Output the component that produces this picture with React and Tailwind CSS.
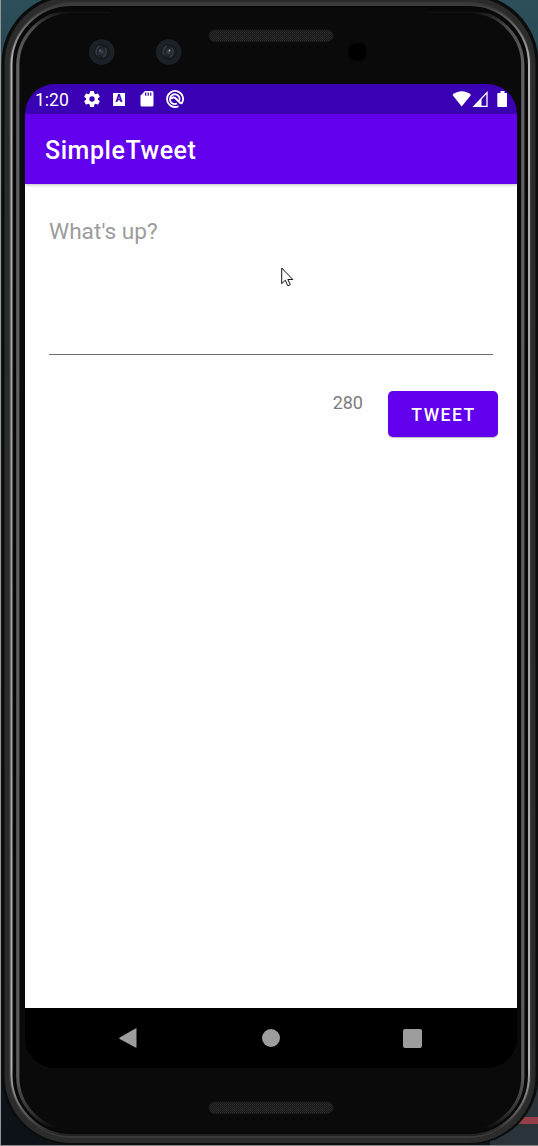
import React from "react";

function PhoneShell() {
  return (
    <svg className="absolute inset-0 h-[1146px] w-[538px]" viewBox="0 0 538 1146" aria-hidden="true">
      <defs>
        <linearGradient id="wall" x1="0" y1="0" x2="0" y2="1">
          <stop offset="0" stopColor="#2c4f59" />
          <stop offset="0.15" stopColor="#203c47" />
          <stop offset="0.8" stopColor="#10161c" />
          <stop offset="1" stopColor="#0c1218" />
        </linearGradient>
        <linearGradient id="shine" x1="0" y1="0" x2="0" y2="1">
          <stop offset="0" stopColor="#3c3c3c" />
          <stop offset="0.015" stopColor="#606060" />
          <stop offset="0.05" stopColor="#b4b4b4" />
          <stop offset="0.5" stopColor="#a0a0a0" />
          <stop offset="0.94" stopColor="#b4b4b4" />
          <stop offset="0.985" stopColor="#505050" />
          <stop offset="1" stopColor="#202020" />
        </linearGradient>
        <linearGradient id="inner" x1="0" y1="0" x2="0" y2="1">
          <stop offset="0" stopColor="#0a0a0a" />
          <stop offset="0.003" stopColor="#242426" />
          <stop offset="0.015" stopColor="#4c4c50" />
          <stop offset="0.05" stopColor="#626266" />
          <stop offset="0.95" stopColor="#5c5c60" />
          <stop offset="0.985" stopColor="#303032" />
          <stop offset="0.998" stopColor="#0a0a0a" />
        </linearGradient>
        <pattern id="mesh" width="2" height="2" patternUnits="userSpaceOnUse">
          <rect width="2" height="2" fill="#161616" />
          <rect width="1" height="1" fill="#303030" />
          <rect x="1" y="1" width="1" height="1" fill="#292929" />
        </pattern>
        <radialGradient id="lens">
          <stop offset="0" stopColor="#3d454e" />
          <stop offset="0.25" stopColor="#22272d" />
          <stop offset="0.6" stopColor="#14181b" />
          <stop offset="0.65" stopColor="#1b2126" />
          <stop offset="1" stopColor="#1b2126" />
        </radialGradient>
      </defs>
      <rect width="538" height="1146" fill="url(#wall)" />
      <rect x="490" y="1080" width="48" height="66" fill="#2b333a" />
      <path d="M490 1117h48v7h-48z" fill="#963f49" />
      <rect x="1.5" y="-6" width="537" height="1150.500" rx="69" fill="#0b0d0d" />
      <rect x="4.500" y="-3" width="531" height="1146" rx="67" fill="#2b2b2b" />
      <rect x="9" y="2" width="522.500" height="1136" rx="64" fill="#393939" />
      <rect x="11.500" y="5" width="517.500" height="1130" rx="60" fill="#080808" stroke="url(#shine)" strokeWidth="2" />
      <rect x="17.800" y="11.500" width="505" height="1119" rx="54" fill="#0a0a0a" stroke="url(#inner)" strokeWidth="3.200" />
      <rect x="110" y="8" width="318" height="8" fill="#0a0a0a" />
      <rect x="0" y="0" width="1" height="1146" fill="#969696" />
      <rect x="0" y="1145" width="538" height="1" fill="#858585" />
      <rect x="209" y="30" width="124" height="11.500" rx="5.700" fill="url(#mesh)" stroke="#1b1b1b" />
      <rect x="209" y="1102" width="124" height="11.500" rx="5.700" fill="url(#mesh)" stroke="#1b1b1b" />
      <circle cx="101.700" cy="52" r="12.800" fill="url(#lens)" />
      <circle cx="168.700" cy="52" r="12.800" fill="url(#lens)" />
      <path d="M97 55a6 6 0 0 1 3-9M105 48a6 6 0 0 1-2 9M164 55a6 6 0 0 1 3-9M172 48a6 6 0 0 1-2 9" fill="none" stroke="#343b44" strokeWidth="1.500" />
      <circle cx="100" cy="50.500" r="1" fill="#646b74" />
      <circle cx="169.500" cy="50.500" r="1" fill="#9ba1a8" />
      <circle cx="357.500" cy="52" r="9.500" fill="#000" />
    </svg>
  );
}

function StatusBar() {
  return (
    <div className="flex h-[30px] shrink-0 items-center bg-[#3a00b3] pl-[10px] pr-[9px] text-white">
      <span className="w-[47px] pt-[2px] text-[17.500px] leading-[30px]">1:20</span>
      <svg className="h-5 w-5" viewBox="0 0 24 24" fill="currentColor">
        <path d="M19.140 12.940c.04-.3.060-.61.060-.94s-.02-.64-.07-.94l2.030-1.580a.49.490 0 0 0 .12-.61l-1.920-3.320a.49.490 0 0 0-.59-.22l-2.390.96a7 7 0 0 0-1.620-.94l-.36-2.540a.48.480 0 0 0-.48-.41h-3.840a.48.480 0 0 0-.47.41l-.36 2.540c-.59.240-1.130.57-1.620.94l-2.390-.96a.48.480 0 0 0-.59.220L2.740 8.870a.48.480 0 0 0 .12.610l2.030 1.580c-.05.3-.09.63-.09.940s.02.640.07.940l-2.030 1.580a.49.490 0 0 0-.12.610l1.920 3.320c.12.220.37.290.59.220l2.390-.96c.5.380 1.030.7 1.620.940l.36 2.540c.05.240.24.410.48.410h3.840c.24 0 .44-.17.470-.41l.36-2.540c.59-.24 1.130-.56 1.620-.94l2.390.96c.22.080.47 0 .59-.22l1.920-3.320a.48.480 0 0 0-.12-.61zM12 15.200A3.200 3.200 0 1 1 12 8.800a3.200 3.200 0 0 1 0 6.400z" />
      </svg>
      <span className="ml-[11px] flex h-[13px] w-3 items-center justify-center bg-white text-[10px] font-black leading-none text-[#3a00b3]">A</span>
      <svg className="ml-[15px] h-4 w-[14px]" viewBox="0 0 14 16">
        <path d="M5 0h7a1.500 1.500 0 0 1 1.500 1.500v12.500A1.500 1.500 0 0 1 12 15.500H2A1.500 1.500 0 0 1 .5 14V4.500z" fill="#fff" />
        <path d="M5.700 1.500v3.300M8.200 1.500v3.300M10.700 1.500v3.300" stroke="#3a00b3" strokeWidth="1.200" />
      </svg>
      <svg className="ml-[12px] h-[18px] w-[18px]" viewBox="0 0 18 18" fill="none" stroke="#fff">
        <path d="M15.300 14A8 8 0 1 0 12.500 16.200" strokeWidth="1.800" />
        <path d="M13 11.600A4.900 4.900 0 1 0 11 13.500" strokeWidth="1.800" />
        <path d="M5 8.800c2-1.800 4-1.500 5 0l4.800 4.700" strokeWidth="2" />
      </svg>
      <svg className="ml-auto h-4 w-[56px]" viewBox="0 0 56 16">
        <path d="M0.500 4C5.500-1 14-1 19 4L9.700 15.500z" fill="#fff" />
        <path d="M35 1.600v13.700H22z" fill="none" stroke="#fff" strokeWidth="1.300" />
        <path d="M29.500 7.500v7.800H22z" fill="#fff" />
        <path d="M46 2h2.500V0h4v2h1.800q.7 0 .7.700v12.600q0 .7-.7.700H46q-.7 0-.7-.7V2.700q0-.7.7-.7z" fill="#fff" />
      </svg>
    </div>
  );
}

function NavigationBar() {
  return (
    <nav className="flex h-[60px] shrink-0 items-center justify-between bg-black pl-[93px] pr-[95px] text-[#9d9d9d]">
      <svg className="h-[22px] w-[19px]" viewBox="0 0 20 22" fill="currentColor">
        <path d="M18.400 1Q19.500.4 19.500 1.500V20.500q0 1-1.100.5L1.800 12q-1.200-.8 0-1.600z" />
      </svg>
      <span className="ml-px h-[18px] w-[18px] rounded-full bg-[#9d9d9d]" />
      <span className="h-[19px] w-[19px] rounded-[2px] bg-[#9d9d9d]" />
    </nav>
  );
}

export default function App() {
  return (
    <div className="relative h-[1146px] w-[538px] overflow-hidden bg-[#0a0a0a] pl-[25px] pt-[84px] font-[Roboto,sans-serif]">
      <PhoneShell />
      <div className="relative flex h-[984px] w-[492px] flex-col overflow-hidden rounded-[30px]">
        <StatusBar />
        <header className="z-10 flex h-[70px] shrink-0 items-center bg-[#6200ee] px-5 pt-[3px] text-[25px] font-medium tracking-[0.550px] text-white shadow-[0_1px_3px_rgba(0,0,0,0.25)]">
          SimpleTweet
        </header>
        <main className="flex-1 bg-[#fefefe] pl-6 pr-[19px] pt-[25px]">
          <div className="mr-[5px] h-[146px] border-b border-[#6c6c6c] pt-[6px] text-[22.700px] leading-[34px] text-[#9c9c9c]">
            What&apos;s up?
          </div>
          <div className="mt-9 flex items-start justify-end">
            <span className="mr-[25px] text-[18px] leading-6 text-[#7c7c7c]">280</span>
            <button className="h-[46px] w-[110px] rounded-[5px] bg-[#6200ee] pl-px pt-[3px] text-[17.500px] font-medium tracking-[1.500px] text-white shadow-[0_1px_1px_rgba(0,0,0,0.25)]">
              TWEET
            </button>
          </div>
        </main>
        <NavigationBar />
      </div>
      <svg className="absolute left-[281px] top-[267px] h-5 w-[13px]" viewBox="0 0 13 20">
        <path d="M.7 1v15.700l3.600-3.500 2.500 5.600 2.500-1.100-2.500-5.200h5z" fill="#fff" stroke="#111" />
      </svg>
    </div>
  );
}
